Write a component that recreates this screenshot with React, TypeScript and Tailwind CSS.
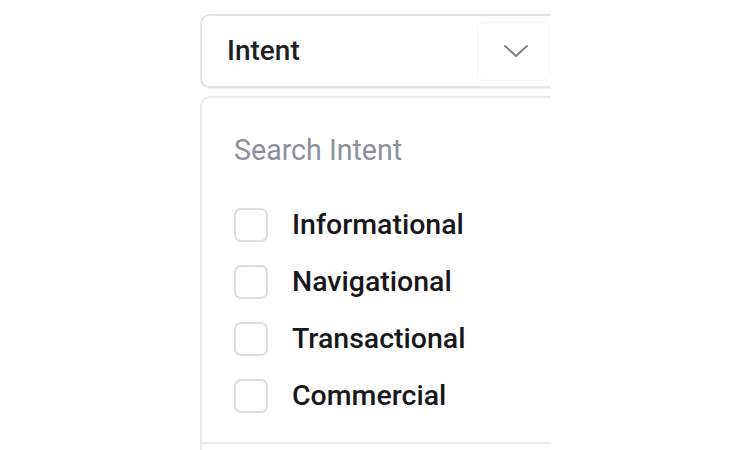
import { useState } from 'react';

const options = ['Informational', 'Navigational', 'Transactional', 'Commercial'];

export default function App() {
  const [checked, setChecked] = useState<string[]>([]);

  const toggle = (opt: string) => {
    setChecked((prev) => (prev.includes(opt) ? prev.filter((o) => o !== opt) : [...prev, opt]));
  };

  return (
    <div className="h-[450px] w-[750px] overflow-hidden bg-white font-['Roboto',sans-serif]">
      <div className="ml-[200px] w-[351px] overflow-hidden pt-[14px]">
        {/* Select trigger */}
        <div className="flex h-[74px] w-[420px] items-center rounded-[10px] border-2 border-[#e4e4e6] bg-white pl-[25px] shadow-[0_1px_2px_rgba(0,0,0,0.06)]">
          <span className="text-[28px] font-medium text-[#1f1f24]">Intent</span>
          <div className="ml-auto mr-[68px] flex h-[59px] w-[73px] items-center justify-center rounded-[6px] border border-[#f6f6f7] bg-[#fefefe] pl-[4px]">
            <svg width="26" height="14" viewBox="0 0 26 14" fill="none">
              <path d="M2 2l11 10L24 2" stroke="#7b7f88" strokeWidth="2" strokeLinecap="round" strokeLinejoin="round" />
            </svg>
          </div>
        </div>

        {/* Dropdown panel */}
        <div className="mt-[8px] w-[420px] rounded-tl-[10px] border-l-2 border-t-2 border-[#ececee] bg-white">
          <div className="pl-[32px] pt-[35px] text-[28.6px] leading-[34px] text-[#8c9099]">Search Intent</div>
          <ul className="mt-[41px] flex flex-col gap-[23px] pb-[29px] pl-[32px]">
            {options.map((opt) => (
              <li key={opt}>
                <label className="flex cursor-pointer items-center gap-[24px]" onClick={() => toggle(opt)}>
                  <span
                    className={
                      checked.includes(opt)
                        ? 'h-[34px] w-[34px] rounded-[7px] border-2 border-[#4f46e5] bg-[#4f46e5]'
                        : 'h-[34px] w-[34px] rounded-[7px] border-2 border-[#dedee1] bg-white'
                    }
                  />
                  <span className="text-[28.5px] font-medium leading-[34px] text-[#18181c]">{opt}</span>
                </label>
              </li>
            ))}
          </ul>
          <div className="h-[20px] border-t-2 border-[#ececee]" />
        </div>
      </div>
    </div>
  );
}
